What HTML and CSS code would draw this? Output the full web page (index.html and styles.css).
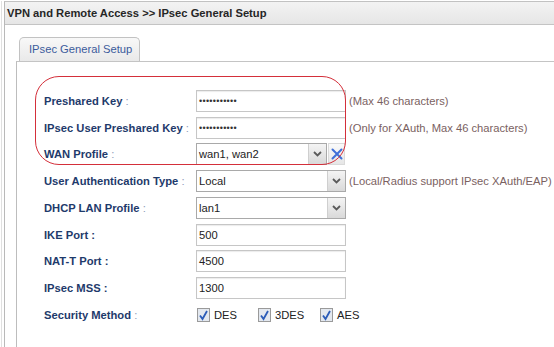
FILE: index.html
```html
<!DOCTYPE html>
<html>
<head>
<meta charset="utf-8">
<link rel="stylesheet" href="styles.css">
</head>
<body>
<div class="page">
  <div class="window">
    <div class="titlebar">VPN and Remote Access &gt;&gt; IPsec General Setup</div>
    <div class="content">
      <div class="tabs"><div class="tab">IPsec General Setup</div></div>
      <div class="panel">
        <div class="form">
          <div class="mark"></div>

          <div class="label">Preshared Key <span class="colon">:</span></div>
          <div class="cell"><div class="input pw">•••••••••••</div><span class="hint">(Max 46 characters)</span></div>

          <div class="label">IPsec User Preshared Key <span class="colon">:</span></div>
          <div class="cell"><div class="input pw">•••••••••••</div><span class="hint">(Only for XAuth, Max 46 characters)</span></div>

          <div class="label">WAN Profile <span class="colon">:</span></div>
          <div class="cell">
            <div class="select short"><span class="val">wan1, wan2</span><span class="arrow"><svg width="9" height="6" viewBox="0 0 9 6"><path d="M1 1 L4.5 4.5 L8 1" fill="none" stroke="#5a5a5a" stroke-width="1.8"/></svg></span></div>
            <span class="clear"><svg width="12" height="12" viewBox="0 0 12 12"><path d="M1.5 1.5 L10.5 10.5 M10.5 1.5 L1.5 10.5" stroke="#3f6fd8" stroke-width="2" stroke-linecap="round"/></svg></span>
          </div>

          <div class="label">User Authentication Type <span class="colon">:</span></div>
          <div class="cell">
            <div class="select"><span class="val">Local</span><span class="arrow"><svg width="9" height="6" viewBox="0 0 9 6"><path d="M1 1 L4.5 4.5 L8 1" fill="none" stroke="#5a5a5a" stroke-width="1.8"/></svg></span></div>
            <span class="hint">(Local/Radius support IPsec XAuth/EAP)</span>
          </div>

          <div class="label">DHCP LAN Profile <span class="colon">:</span></div>
          <div class="cell">
            <div class="select"><span class="val">lan1</span><span class="arrow"><svg width="9" height="6" viewBox="0 0 9 6"><path d="M1 1 L4.5 4.5 L8 1" fill="none" stroke="#5a5a5a" stroke-width="1.8"/></svg></span></div>
          </div>

          <div class="label">IKE Port :</div>
          <div class="cell"><div class="input">500</div></div>

          <div class="label">NAT-T Port :</div>
          <div class="cell"><div class="input">4500</div></div>

          <div class="label">IPsec MSS :</div>
          <div class="cell"><div class="input">1300</div></div>

          <div class="label">Security Method <span class="colon">:</span></div>
          <div class="cell checks">
            <span class="check"><svg width="13" height="14" viewBox="0 0 13 14"><rect x="0.5" y="0.5" width="12" height="13" fill="#e3e8ef" stroke="#9a9a9a"/><path d="M3 7.5 L5.5 11 L10 3" fill="none" stroke="#2b5cb8" stroke-width="1.8"/></svg>DES</span>
            <span class="check"><svg width="13" height="14" viewBox="0 0 13 14"><rect x="0.5" y="0.5" width="12" height="13" fill="#e3e8ef" stroke="#9a9a9a"/><path d="M3 7.5 L5.5 11 L10 3" fill="none" stroke="#2b5cb8" stroke-width="1.8"/></svg>3DES</span>
            <span class="check"><svg width="13" height="14" viewBox="0 0 13 14"><rect x="0.5" y="0.5" width="12" height="13" fill="#e3e8ef" stroke="#9a9a9a"/><path d="M3 7.5 L5.5 11 L10 3" fill="none" stroke="#2b5cb8" stroke-width="1.8"/></svg>AES</span>
          </div>
        </div>
      </div>
    </div>
  </div>
</div>
</body>
</html>
```
FILE: styles.css
```css
html, body {
  margin: 0;
  padding: 0;
  background: #ffffff;
  overflow: hidden;
}
body {
  width: 554px;
  height: 347px;
  font-family: "Liberation Sans", Arial, sans-serif;
  font-size: 11.2px;
}
.page {
  margin-left: 1px;
  border-left: 1px solid #e0e0e0;
  padding-left: 2px;
  height: 347px;
}
.window {
  margin-top: 1px;
  border-top: 1px solid #c2c2c2;
  border-left: 1px solid #b9b9b9;
  height: 346px;
}
.titlebar {
  height: 22px;
  line-height: 22px;
  padding-left: 2px;
  background: linear-gradient(#f3f3f3, #e6e6e6);
  border-bottom: 1px solid #c4c4c4;
  font-weight: bold;
  color: #262626;
  white-space: nowrap;
}
.content {
  padding: 12px 0 0 11px;
}
.tabs {
  display: flex;
  padding-left: 3px;
}
.tab {
  width: 110px;
  height: 23px;
  line-height: 23px;
  padding-left: 9px;
  border: 1px solid #c2c2c2;
  border-bottom: none;
  border-radius: 5px 5px 0 0;
  background: linear-gradient(#f8f8f8, #e9e9e9);
  color: #3b5b9c;
  white-space: nowrap;
}
.panel {
  border-top: 1px solid #c4c4c4;
  border-left: 1px solid #bdbdbd;
  height: 300px;
}
.form {
  position: relative;
  display: grid;
  grid-template-columns: 152px auto;
  grid-auto-rows: 26.75px;
  align-items: center;
  padding: 25.6px 0 0 27px;
}
.mark {
  position: absolute;
  left: 18px;
  top: 14px;
  width: 309px;
  height: 87px;
  border: 1.5px solid #d42f3a;
  border-radius: 24px;
  pointer-events: none;
}
.label {
  font-weight: bold;
  color: #1e3a6b;
  white-space: nowrap;
}
.colon {
  font-weight: normal;
  color: #8d9bb8;
}
.cell {
  display: flex;
  align-items: center;
  gap: 3px;
  white-space: nowrap;
}
.input {
  box-sizing: border-box;
  width: 150px;
  height: 22px;
  line-height: 20px;
  padding-left: 2px;
  border: 1px solid #c6c6c6;
  box-shadow: inset 0 1px 1px #ececec;
  color: #222;
  background: #fff;
}
.pw {
  font-size: 9px;
  letter-spacing: 0.3px;
  color: #333;
}
.hint {
  color: #7a6161;
}
.select {
  box-sizing: border-box;
  display: flex;
  width: 150px;
  height: 22px;
  border: 1px solid #a9a9a9;
  background: #fff;
  color: #222;
}
.select.short {
  width: 131px;
}
.select .val {
  flex: 1;
  line-height: 20px;
  padding-left: 2px;
}
.select .arrow {
  width: 17px;
  display: flex;
  align-items: center;
  justify-content: center;
  border-left: 1px solid #cfcfcf;
  background: linear-gradient(#f4f4f4, #d9d9d9);
}
.clear {
  box-sizing: border-box;
  width: 17px;
  height: 22px;
  margin-left: -2px;
  display: flex;
  align-items: center;
  justify-content: center;
  border: 1px solid #dadada;
  background: linear-gradient(#fafafa, #e6e6e6);
}
.checks {
  gap: 0;
  padding-left: 1px;
}
.check {
  display: flex;
  align-items: center;
  gap: 4px;
  width: 62px;
  color: #222;
}
.check:first-child {
  width: 61px;
}
```
